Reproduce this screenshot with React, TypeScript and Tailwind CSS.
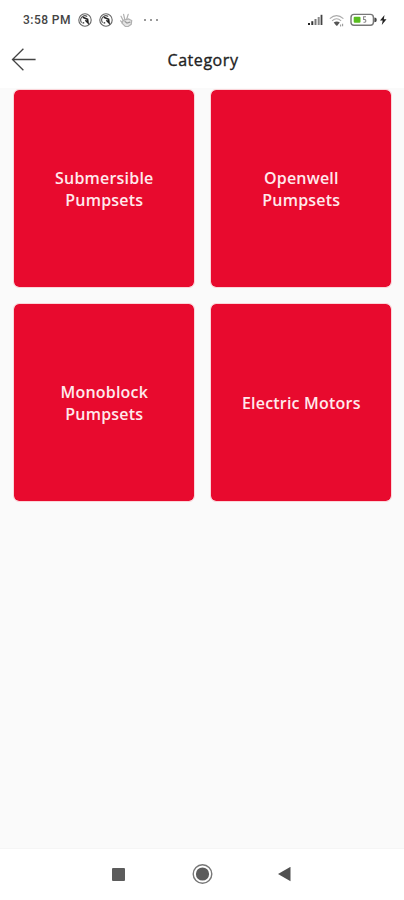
import React from "react";

const categories: string[][] = [
  ["Submersible", "Pumpsets"],
  ["Openwell", "Pumpsets"],
  ["Monoblock", "Pumpsets"],
  ["Electric Motors"],
];

function ShareBadge() {
  return (
    <svg width="14" height="14" viewBox="0 0 14 14" fill="none">
      <circle cx="7" cy="7" r="6.2" stroke="#666" strokeWidth="1.1" />
      <path d="M3.6 9.6A4.2 4.2 0 0 1 9.2 3.5" stroke="#555" strokeWidth="1.1" />
      <path d="M4.8 4.2 9.6 6.2 10 9.8 7.4 7.2M5.4 9.2v1.4" stroke="#222" strokeWidth="1.6" />
    </svg>
  );
}

function HandIcon() {
  return (
    <svg width="15" height="15" viewBox="0 0 15 15" fill="none" stroke="#b0b0b0" strokeWidth="1.2" strokeLinecap="round">
      <path d="M4.2 7.5 2 3.2M5.8 6.5 4.6 1.4M7.6 6.5 9.2 1.4M1.6 7.8l3 3.2" />
      <path d="M4.2 7.3 9.5 6l3.2 1.5-.5 3.8-3 2.2H6.3L3 10.2Z" fill="#e5e5e5" />
      <path d="M6 8.6 8 10l3-.8" stroke="#999" />
    </svg>
  );
}

function SignalIcon() {
  return (
    <svg width="17" height="12" viewBox="0 0 17 12">
      <path d="M1 9h2v2H1z" fill="#222" />
      <path d="M4.3 7.2h2V11h-2z" fill="#333" />
      <path d="M7.5 5h2v6h-2z" fill="#777" />
      <path d="M10.7 3h2v8h-2z" fill="#888" />
      <path d="M13.6 .8h1.8V11h-1.8z" fill="#444" />
    </svg>
  );
}

function WifiIcon() {
  return (
    <svg width="17" height="14" viewBox="0 0 17 14" fill="none">
      <path d="M.8 4.7Q7.5 -1.5 14.4 4.7" stroke="#aaa" strokeWidth="1.1" />
      <path d="M3.1 6.8Q7.6 2.8 12.1 6.8" stroke="#aaa" strokeWidth="1.1" />
      <path d="M4.7 8.5Q7.8 6.5 10.8 8.5L8.2 11.8H7.4Z" fill="#555" />
      <path d="M11.6 10.5v2M13.6 9.8v2.5" stroke="#999" strokeWidth="1.1" />
    </svg>
  );
}

function BatteryIcon() {
  return (
    <svg width="27" height="14" viewBox="0 0 27 14" fill="none">
      <rect x="1" y="1.4" width="22.4" height="10.8" rx="3" fill="#fff" stroke="#777" strokeWidth="1.4" />
      <path d="M24.4 4.6q2.4 0 2.4 2.3t-2.4 2.3Z" fill="#444" />
      <rect x="3.7" y="3.8" width="6.8" height="6" rx="1" fill="#59bd20" />
      <path d="M16 3.8h-2.4v2.6q2.5-.2 2.2 1.7-.2 1.5-2.3 1.1" stroke="#888" strokeWidth="1.1" />
    </svg>
  );
}

function StatusBar() {
  return (
    <header className="flex h-10 shrink-0 items-center bg-white pl-[23px] pr-[17px]">
      <span className="w-[50px] whitespace-nowrap text-[12px] font-medium leading-none tracking-[0.45px] text-[#444] font-[Roboto,sans-serif]">3:58 PM</span>
      <div className="ml-[5px] flex items-center gap-[6.5px]">
        <ShareBadge />
        <ShareBadge />
        <HandIcon />
      </div>
      <div className="ml-[10px] flex gap-[4px]">
        <i className="size-[2px] rounded-full bg-[#777]" />
        <i className="size-[2px] rounded-full bg-[#777]" />
        <i className="size-[2px] rounded-full bg-[#777]" />
      </div>
      <div className="ml-auto flex items-center">
        <SignalIcon />
        <span className="ml-[5px] mt-[1px] block"><WifiIcon /></span>
        <span className="ml-[4px] block"><BatteryIcon /></span>
        <svg className="ml-[3px]" width="7" height="10" viewBox="0 0 7 10"><path d="M4.5 0 0 5.5h2.7L1.8 10 6.5 4.2H3.8Z" fill="#222" /></svg>
      </div>
    </header>
  );
}

export default function App() {
  return (
    <div className="flex h-[900px] w-[404px] flex-col overflow-hidden bg-[#fafafa] font-['Open_Sans',sans-serif]">
      <StatusBar />
      <div className="grid h-12 shrink-0 grid-cols-[1fr_auto_1fr] items-start bg-white">
        <svg className="ml-[11px] mt-[7px]" width="26" height="25" viewBox="0 0 26 25" fill="none" stroke="#444" strokeWidth="1.3">
          <path d="M24.6 12.5H1.8M12.4 1.7 1.5 12.5 12.4 23.3" />
        </svg>
        <h1 className="ml-[2px] mt-[8px] text-[16px] font-normal leading-6 tracking-[0.55px] text-[#222] [-webkit-text-stroke:0.35px_#222]">Category</h1>
      </div>
      <main className="grid flex-1 auto-rows-[197px] grid-cols-[180px_180px] content-start gap-x-[17px] gap-y-[17px] pl-[14.3px] pt-[2px]">
        {categories.map((lines) => (
          <button key={lines.join(" ")} className="flex flex-col items-center justify-center rounded-[5px] bg-[#e80a2e] text-[16px] font-semibold leading-[22px] tracking-[0.2px] text-[#ffe9ec] outline outline-1 outline-[#fbd5d9]">
            {lines.map((line) => <span key={line}>{line}</span>)}
          </button>
        ))}
      </main>
      <nav className="flex h-[52px] shrink-0 items-center border-t border-[#f5f5f5] bg-white pl-[112px]">
        <i className="size-[13px] rounded-[1px] bg-[#5c5c5c]" />
        <svg className="ml-[67px]" width="21" height="21" viewBox="0 0 21 21">
          <circle cx="10.5" cy="10" r="9.3" fill="none" stroke="#777" strokeWidth="1.4" />
          <circle cx="10.5" cy="10" r="6.6" fill="#5c5c5c" />
        </svg>
        <svg className="ml-[65px]" width="13" height="15" viewBox="0 0 13 15"><path d="M0 7 12.5-.2v14.4Z" fill="#505050" /></svg>
      </nav>
    </div>
  );
}
